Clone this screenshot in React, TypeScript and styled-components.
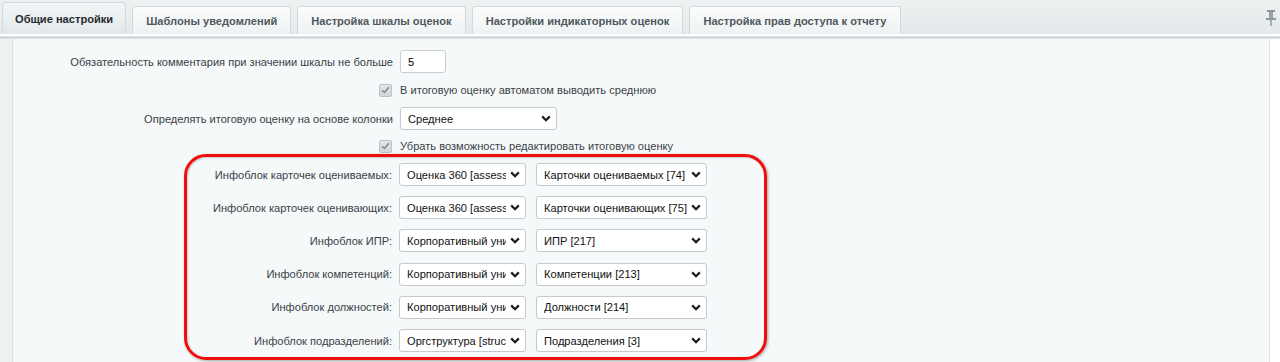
import React from "react";
import { styled, createGlobalStyle } from "styled-components";

const GlobalStyle = createGlobalStyle`
    body {
        margin: 0;
        background: #ffffff;
        font-family: "Liberation Sans", Arial, sans-serif;
    }
`;

const Page = styled.div`
    width: 1280px;
    height: 362px;
    overflow: hidden;
    display: flex;
    flex-direction: column;
`;

const TabBar = styled.div`
    display: flex;
    align-items: flex-end;
    gap: 6px;
    height: 34px;
    padding-left: 2px;
    background: linear-gradient(#edf1f2, #e3e9ea);
    position: relative;
`;

const Tab = styled.div<{ $active?: boolean }>`
    display: flex;
    align-items: center;
    height: ${(p) => (p.$active ? "32px" : "28px")};
    padding: 0 ${(p) => (p.$active ? "12px" : "13px")};
    box-sizing: border-box;
    border: 1px solid #d3dadd;
    border-bottom: none;
    border-radius: 3px 3px 0 0;
    background: ${(p) =>
        p.$active
            ? "linear-gradient(#f3f6f7, #e2e8ea)"
            : "linear-gradient(#fbfcfc, #eef2f3)"};
    font-size: 11.1px;
    font-weight: 700;
    color: ${(p) => (p.$active ? "#262b2e" : "#4f585d")};
    white-space: nowrap;
`;

const PinWrapper = styled.div`
    position: absolute;
    right: 4px;
    top: 10px;
`;

const Ridge = styled.div`
    height: 5px;
    background: linear-gradient(#fdfefe 0, #fdfefe 2px, #e2e7e9 2px, #c9d0d3 4px, #e9eef0 5px);
`;

const Body = styled.div`
    flex: 1;
    display: flex;
`;

const LeftStrip = styled.div`
    width: 12px;
    background: #eef2f3;
    border-right: 1px solid #dce2e4;
`;

const RightStrip = styled.div`
    width: 10px;
    background: #ffffff;
    border-left: 1px solid #dce2e4;
`;

const Panel = styled.div`
    flex: 1;
    background: #f5f9f9;
    padding-top: 8px;
    display: flex;
    flex-direction: column;
`;

const Row = styled.div<{ $h: number }>`
    display: flex;
    align-items: center;
    height: ${(p) => p.$h}px;
`;

const Label = styled.div<{ $w: number }>`
    width: ${(p) => p.$w}px;
    box-sizing: border-box;
    padding-right: 7px;
    text-align: right;
    font-size: 11.1px;
    color: #3a4146;
    white-space: nowrap;
    display: flex;
    justify-content: flex-end;
    align-items: center;
`;

const CheckText = styled.div`
    font-size: 11.1px;
    color: #3a4146;
    white-space: nowrap;
`;

const CheckBox = styled.div`
    width: 13px;
    height: 13px;
    box-sizing: border-box;
    border-radius: 2px;
    background: linear-gradient(#e1e5e7, #cfd5d8);
    border: 1px solid #b9c1c5;
    display: flex;
    align-items: center;
    justify-content: center;
    margin-right: 1px;
`;

const TextInput = styled.div`
    width: 46px;
    height: 23px;
    box-sizing: border-box;
    border: 1px solid #c7cfd3;
    border-radius: 3px;
    background: #fff;
    font-size: 11.1px;
    color: #000;
    padding-left: 7px;
    display: flex;
    align-items: center;
`;

const SelectBox = styled.div<{ $w: number }>`
    width: ${(p) => p.$w}px;
    height: 23px;
    box-sizing: border-box;
    border: 1px solid #c3cbd0;
    border-radius: 3px;
    background: #fff;
    display: flex;
    align-items: center;
    padding: 0 5px 0 7px;
    gap: 4px;
`;

const SelectText = styled.div`
    flex: 1;
    overflow: hidden;
    white-space: nowrap;
    font-size: 11.1px;
    color: #111;
`;

const Highlight = styled.div`
    margin-top: -5px;
    margin-left: 171px;
    width: 583px;
    box-sizing: border-box;
    border: 3px solid #f20d0d;
    border-radius: 22px;
    padding-top: 1px;
    box-shadow: 1px 1px 3px rgba(0, 0, 0, 0.35), inset 1px 1px 2px rgba(0, 0, 0, 0.2);
`;

const BoxRow = styled.div`
    display: flex;
    align-items: center;
    height: 33.2px;
`;

const Selects = styled.div`
    display: flex;
    gap: 10px;
`;

const Chevron = () => (
    <svg width="10" height="7" viewBox="0 0 10 7">
        <path d="M1.2 1.4 L5 5.2 L8.8 1.4" fill="none" stroke="#1c1c1c" strokeWidth="2.2" />
    </svg>
);

const Check = () => (
    <svg width="9" height="8" viewBox="0 0 9 8">
        <path d="M1 4.2 L3.4 6.4 L8 1.2" fill="none" stroke="#7c868b" strokeWidth="1.4" />
    </svg>
);

const Pin = () => (
    <svg width="10" height="16" viewBox="0 0 10 16">
        <rect x="1" y="0" width="8" height="2" fill="#8e979c" />
        <rect x="3" y="2" width="4" height="6" fill="#9aa3a8" />
        <rect x="0" y="8" width="10" height="2" fill="#8e979c" />
        <rect x="4.3" y="10" width="1.4" height="6" fill="#8e979c" />
    </svg>
);

const Select: React.FC<{ w: number; text: string }> = ({ w, text }) => (
    <SelectBox $w={w}>
        <SelectText>{text}</SelectText>
        <Chevron />
    </SelectBox>
);

const tabs = [
    "Общие настройки",
    "Шаблоны уведомлений",
    "Настройка шкалы оценок",
    "Настройки индикаторных оценок",
    "Настройка прав доступа к отчету",
];

const iblocks = [
    { label: "Инфоблок карточек оцениваемых:", type: "Оценка 360 [assessment]", block: "Карточки оцениваемых [74]" },
    { label: "Инфоблок карточек оценивающих:", type: "Оценка 360 [assessment]", block: "Карточки оценивающих [75]" },
    { label: "Инфоблок ИПР:", type: "Корпоративный университет", block: "ИПР [217]" },
    { label: "Инфоблок компетенций:", type: "Корпоративный университет", block: "Компетенции [213]" },
    { label: "Инфоблок должностей:", type: "Корпоративный университет", block: "Должности [214]" },
    { label: "Инфоблок подразделений:", type: "Оргструктура [structure]", block: "Подразделения [3]" },
];

const App: React.FC = () => {
    return (
        <Page>
            <GlobalStyle />
            <TabBar>
                {tabs.map((t, i) => (
                    <Tab key={t} $active={i === 0}>
                        {t}
                    </Tab>
                ))}
                <PinWrapper>
                    <Pin />
                </PinWrapper>
            </TabBar>
            <Ridge />
            <Body>
                <LeftStrip />
                <Panel>
                    <Row $h={29}>
                        <Label $w={387}>Обязательность комментария при значении шкалы не больше</Label>
                        <TextInput>5</TextInput>
                    </Row>
                    <Row $h={28}>
                        <Label $w={387}>
                            <CheckBox>
                                <Check />
                            </CheckBox>
                        </Label>
                        <CheckText>В итоговую оценку автоматом выводить среднюю</CheckText>
                    </Row>
                    <Row $h={29}>
                        <Label $w={387}>Определять итоговую оценку на основе колонки</Label>
                        <Select w={157} text="Среднее" />
                    </Row>
                    <Row $h={26}>
                        <Label $w={387}>
                            <CheckBox>
                                <Check />
                            </CheckBox>
                        </Label>
                        <CheckText>Убрать возможность редактировать итоговую оценку</CheckText>
                    </Row>
                    <Highlight>
                        {iblocks.map((r) => (
                            <BoxRow key={r.label}>
                                <Label $w={212}>{r.label}</Label>
                                <Selects>
                                    <Select w={127} text={r.type} />
                                    <Select w={171} text={r.block} />
                                </Selects>
                            </BoxRow>
                        ))}
                    </Highlight>
                </Panel>
                <RightStrip />
            </Body>
        </Page>
    );
};

export default App;
